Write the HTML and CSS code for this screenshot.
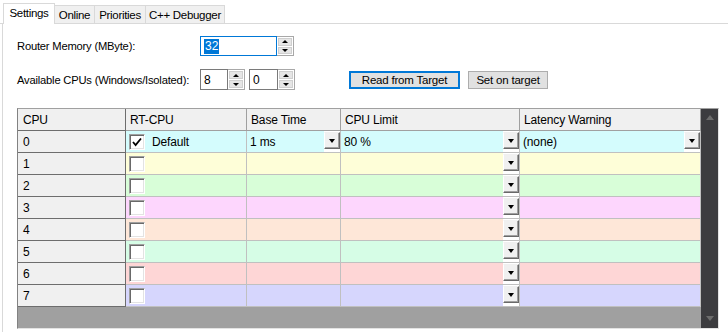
FILE: index.html
```html
<!DOCTYPE html>
<html>
<head>
<meta charset="utf-8">
<link rel="stylesheet" href="styles.css">
</head>
<body>
<div class="tabs">
  <div class="tab active t-settings">Settings</div>
  <div class="tab t-online">Online</div>
  <div class="tab t-prio">Priorities</div>
  <div class="tab t-cpp">C++ Debugger</div>
</div>
<div class="page">
  <div class="form">
    <div class="frow">
      <span class="lbl">Router Memory (MByte):</span>
      <div class="num focus w-mem"><span class="sel">32</span></div>
      <div class="spin"><span class="sb"><i class="au"></i></span><span class="sb"><i class="ad"></i></span></div>
    </div>
    <div class="frow r2">
      <span class="lbl">Available CPUs (Windows/Isolated):</span>
      <div class="num w-a">8</div>
      <div class="spin"><span class="sb"><i class="au"></i></span><span class="sb"><i class="ad"></i></span></div>
      <div class="num w-b">0</div>
      <div class="spin"><span class="sb"><i class="au"></i></span><span class="sb"><i class="ad"></i></span></div>
      <button class="btn btn-default">Read from Target</button>
      <button class="btn btn-set">Set on target</button>
    </div>
  </div>

  <div class="grid">
    <div class="gmain">
      <div class="cells">
        <div class="row head">
          <div class="rh">CPU</div>
          <div class="hc">RT-CPU</div>
          <div class="hc">Base Time</div>
          <div class="hc">CPU Limit</div>
          <div class="hc">Latency Warning</div>
        </div>
        <div class="row r0">
          <div class="rh">0</div>
          <div class="c chk"><span class="cb"><svg width="10" height="10" viewBox="0 0 10 10"><path d="M1 5 L3.6 8 L9 1.5" fill="none" stroke="#000" stroke-width="1.8"/></svg></span><span class="cbt">Default</span></div>
          <div class="c combo"><span class="ct">1 ms</span><span class="ddw"><span class="dd"><i></i></span></span></div>
          <div class="c combo"><span class="ct">80 %</span><span class="ddw"><span class="dd"><i></i></span></span></div>
          <div class="c combo"><span class="ct">(none)</span><span class="ddw"><span class="dd"><i></i></span></span></div>
        </div>
        <div class="row r1">
          <div class="rh">1</div>
          <div class="c chk"><span class="cb"></span></div>
          <div class="c"></div>
          <div class="c combo"><span class="ct"></span><span class="ddw"><span class="dd"><i></i></span></span></div>
          <div class="c"></div>
        </div>
        <div class="row r2c">
          <div class="rh">2</div>
          <div class="c chk"><span class="cb"></span></div>
          <div class="c"></div>
          <div class="c combo"><span class="ct"></span><span class="ddw"><span class="dd"><i></i></span></span></div>
          <div class="c"></div>
        </div>
        <div class="row r3">
          <div class="rh">3</div>
          <div class="c chk"><span class="cb"></span></div>
          <div class="c"></div>
          <div class="c combo"><span class="ct"></span><span class="ddw"><span class="dd"><i></i></span></span></div>
          <div class="c"></div>
        </div>
        <div class="row r4">
          <div class="rh">4</div>
          <div class="c chk"><span class="cb"></span></div>
          <div class="c"></div>
          <div class="c combo"><span class="ct"></span><span class="ddw"><span class="dd"><i></i></span></span></div>
          <div class="c"></div>
        </div>
        <div class="row r5">
          <div class="rh">5</div>
          <div class="c chk"><span class="cb"></span></div>
          <div class="c"></div>
          <div class="c combo"><span class="ct"></span><span class="ddw"><span class="dd"><i></i></span></span></div>
          <div class="c"></div>
        </div>
        <div class="row r6">
          <div class="rh">6</div>
          <div class="c chk"><span class="cb"></span></div>
          <div class="c"></div>
          <div class="c combo"><span class="ct"></span><span class="ddw"><span class="dd"><i></i></span></span></div>
          <div class="c"></div>
        </div>
        <div class="row r7">
          <div class="rh">7</div>
          <div class="c chk"><span class="cb"></span></div>
          <div class="c"></div>
          <div class="c combo"><span class="ct"></span><span class="ddw"><span class="dd"><i></i></span></span></div>
          <div class="c"></div>
        </div>
      </div>
      <div class="filler"></div>
    </div>
    <div class="vscroll">
      <i class="su"></i>
      <i class="sd"></i>
    </div>
  </div>
</div>
</body>
</html>
```
FILE: styles.css
```css
* { box-sizing: border-box; }
html, body { margin: 0; padding: 0; background: #fff; }
body {
  width: 728px;
  height: 332px;
  overflow: hidden;
  font-family: "Liberation Sans", Arial, sans-serif;
  font-size: 11px;
  color: #000;
}

/* Tabs */
.tabs {
  display: flex;
  align-items: flex-end;
  height: 24px;
  padding-left: 3px;
  border-bottom: 1px solid #d9d9d9;
}
.tab {
  height: 18px;
  border: 1px solid #d9d9d9;
  border-left: none;
  border-bottom: none;
  background: #f0f0f0;
  display: flex;
  align-items: center;
  justify-content: center;
  font-size: 11.5px;
  letter-spacing: -0.3px;
}
.tab.active {
  height: 21px;
  margin-bottom: -1px;
  border-left: 1px solid #d9d9d9;
  background: #fff;
  padding-bottom: 2px;
}
.t-settings { width: 52px; }
.t-online { width: 40px; }
.t-prio { width: 51px; }
.t-cpp { width: 79px; }

/* Page */
.page {
  margin-left: 2px;
  border-left: 1px solid #d9d9d9;
  height: 308px;
  padding: 12px 0 0 14px;
}

.form {
  display: flex;
  flex-direction: column;
  gap: 13px;
}
.frow {
  display: flex;
  align-items: center;
  height: 20px;
}
.frow.r2 { height: 21px; }
.lbl {
  width: 183px;
  flex: none;
  font-size: 11.2px;
  letter-spacing: -0.2px;
}
.num {
  height: 100%;
  border: 1px solid #7a7a7a;
  display: flex;
  align-items: center;
  padding-left: 3px;
  font-size: 12px;
}
.num.focus { border-color: #0078d7; }
.w-mem { width: 77px; }
.w-a { width: 28px; }
.w-b { width: 29px; margin-left: 4px; }
.sel {
  background: #0078d7;
  color: #fff;
  line-height: 15px;
  padding: 0 1px;
}
.spin {
  width: 17px;
  height: 100%;
  display: flex;
  flex-direction: column;
  border: 1px solid #a8a8a8;
  border-left: none;
  background: #fff;
  padding: 1px;
  gap: 1px;
}
.sb {
  flex: 1;
  background: #e5e5e5;
  border: 1px solid #cfcfcf;
  display: flex;
  align-items: center;
  justify-content: center;
}
.au, .ad {
  width: 0; height: 0;
  border-left: 3px solid transparent;
  border-right: 3px solid transparent;
}
.au { border-bottom: 3px solid #000; }
.ad { border-top: 3px solid #000; }

.btn {
  font-family: "Liberation Sans", Arial, sans-serif;
  font-size: 11.5px;
  letter-spacing: -0.2px;
  height: 18px;
  padding: 0;
  background: #e1e1e1;
  border: 1px solid #adadad;
  color: #000;
}
.btn-default {
  width: 111px;
  margin-left: 54px;
  border: 2px solid #0078d7;
}
.btn-set {
  width: 80px;
  margin-left: 8px;
}

/* Grid */
.grid {
  margin-top: 18px;
  width: 702px;
  height: 221px;
  display: flex;
  border: 1px solid;
  border-color: #a0a0a0 #e3e3e3 #e3e3e3 #828282;
}
.gmain {
  width: 683px;
  display: flex;
  flex-direction: column;
}
.cells {
  display: grid;
  grid-template-columns: 108px 121px 94px 179px 181px;
  grid-auto-rows: 22px;
}
.row { display: contents; }
.rh, .hc, .c {
  border-right: 1px solid #c0c0c0;
  border-bottom: 1px solid #c0c0c0;
  display: flex;
  align-items: center;
  font-size: 12px;
  letter-spacing: -0.15px;
  padding-left: 4px;
  white-space: nowrap;
}
.rh {
  background: #f0f0f0;
  border-color: #6d6d6d;
  padding-left: 5px;
}
.hc {
  background: #f0f0f0;
  border-right-color: #a0a0a0;
  border-bottom-color: #a0a0a0;
}
.head .rh { border-bottom-color: #6d6d6d; }

.r0 .c { background: #d4fcfd; }
.r1 .c { background: #fefed8; }
.r2c .c { background: #d8fed8; }
.r3 .c { background: #fdd6fd; }
.r4 .c { background: #fee7d8; }
.r5 .c { background: #d6fde6; }
.r6 .c { background: #fed6d6; }
.r7 .c { background: #d6d6fd; }

.chk { padding-left: 3px; }
.cb {
  width: 16px;
  height: 16px;
  flex: none;
  background: #fff;
  border: 1px solid;
  border-color: #a0a0a0 #fff #fff #a0a0a0;
  box-shadow: inset 1px 1px 0 #696969, inset -1px -1px 0 #e3e3e3;
  display: flex;
  align-items: center;
  justify-content: center;
}
.cbt { margin-left: 7px; }

.combo {
  padding-left: 0;
  align-items: stretch;
}
.ct {
  flex: 1;
  display: flex;
  align-items: center;
  padding-left: 3px;
}
.ddw {
  width: 16px;
  flex: none;
  background: #fff;
}
.dd {
  display: flex;
  align-items: center;
  justify-content: center;
  height: 17px;
  margin-top: 1px;
  background: #f0f0f0;
  border: 1px solid;
  border-color: #f0f0f0 #696969 #696969 #fff;
  box-shadow: inset -1px -1px 0 #a0a0a0;
}
.dd i {
  width: 0; height: 0;
  border-left: 3.5px solid transparent;
  border-right: 3.5px solid transparent;
  border-top: 4px solid #000;
  margin-left: -1px;
}

.filler {
  flex: 1;
  background: #a0a0a0;
}

.vscroll {
  width: 17px;
  background: #3c3c3f;
  display: flex;
  flex-direction: column;
  justify-content: space-between;
  align-items: center;
  padding: 6px 0 7px;
}
.su, .sd {
  width: 0; height: 0;
  border-left: 4.5px solid transparent;
  border-right: 4.5px solid transparent;
}
.su { border-bottom: 5px solid #6c6c6c; }
.sd { border-top: 5px solid #6c6c6c; }
```
